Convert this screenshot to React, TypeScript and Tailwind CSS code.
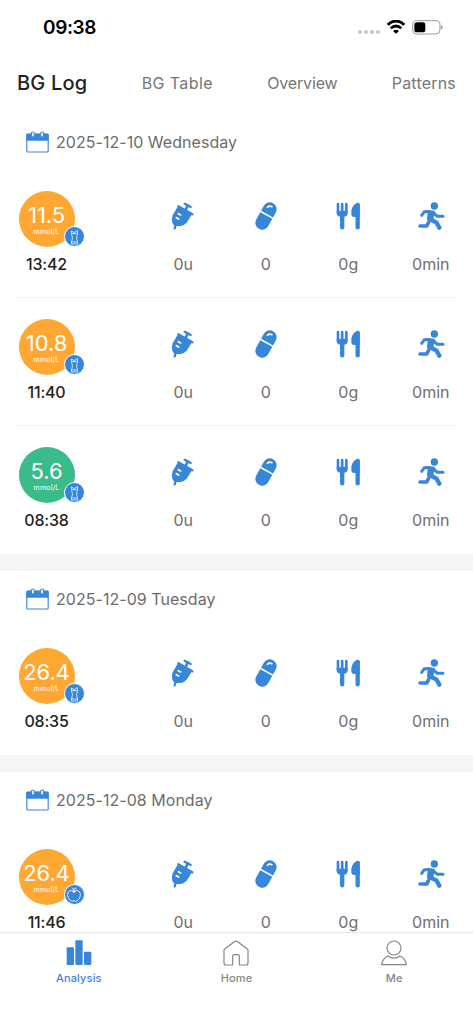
import type { ReactNode } from "react";

type MealKind = "drink" | "apple";

type Reading = {
  value: string;
  time: string;
  level: "high" | "normal";
  meal: MealKind;
};

type Day = {
  date: string;
  readings: Reading[];
};

const days: Day[] = [
  {
    date: "2025-12-10 Wednesday",
    readings: [
      { value: "11.5", time: "13:42", level: "high", meal: "drink" },
      { value: "10.8", time: "11:40", level: "high", meal: "drink" },
      { value: "5.6", time: "08:38", level: "normal", meal: "drink" },
    ],
  },
  {
    date: "2025-12-09 Tuesday",
    readings: [{ value: "26.4", time: "08:35", level: "high", meal: "drink" }],
  },
  {
    date: "2025-12-08 Monday",
    readings: [{ value: "26.4", time: "11:46", level: "high", meal: "apple" }],
  },
];

const SyringeIcon = () => (
  <svg viewBox="0 0 72 84" className="h-7 w-6" fill="none" stroke="currentColor" strokeLinecap="round">
    <path d="M41 5L59 15" strokeWidth="7" />
    <path d="M50 10L44 24" strokeWidth="8" />
    <path d="M22 13L64 37" strokeWidth="7" />
    <path d="M20 14L5 40Q1 50 4 62Q6 69 14 72L29 72Q41 70 48 61L62 38Z" fill="currentColor" stroke="none" />
    <path d="M14 69L11 79" strokeWidth="7" />
    <path d="M22 35L29 39M16 47L23 51" stroke="white" strokeWidth="5" />
  </svg>
);

const PillIcon = () => (
  <svg viewBox="0 0 72 84" className="h-7 w-6" fill="none">
    <g transform="translate(36 42) rotate(29)">
      <rect x="-20.5" y="-44" width="41" height="88" rx="20.5" fill="currentColor" />
      <path d="M-22 -4H22" stroke="white" strokeWidth="5" />
      <path d="M-9 -25Q-7 -33 2 -33" stroke="white" strokeWidth="5" strokeLinecap="round" />
    </g>
  </svg>
);

const CutleryIcon = () => (
  <svg viewBox="0 0 72 84" className="h-7 w-6" fill="none" stroke="currentColor" strokeLinecap="round">
    <path d="M6 6V31M18.500 6V31M31 6V31" strokeWidth="8" />
    <path d="M2 26H35V34Q35 43 25 44H12Q2 43 2 34Z" fill="currentColor" stroke="none" />
    <path d="M18.500 38V76M65 9V76" strokeWidth="13" />
    <path d="M71 8Q71 2 64 3Q50 7 46 26V38Q47 45 55 45H71Z" fill="currentColor" stroke="none" />
  </svg>
);

const RunnerIcon = () => (
  <svg viewBox="0 0 84 84" className="size-7" fill="none" stroke="currentColor" strokeLinecap="round" strokeLinejoin="round">
    <circle cx="52" cy="12" r="11" fill="currentColor" stroke="none" />
    <path d="M14 40L21 30Q28 27 40 29" strokeWidth="9" />
    <path d="M35 28L51 29L47 48L49 58L37 58Q31 54 33 46Z" fill="currentColor" strokeWidth="5" />
    <path d="M50 33L61 43H78" strokeWidth="9" />
    <path d="M41 53L59 62L67 77" strokeWidth="13" />
    <path d="M34 63L29 72H9" strokeWidth="11" />
  </svg>
);

const CalendarIcon = () => (
  <svg viewBox="0 0 69 66" className="h-[22px] w-[23px]" fill="none">
    <rect x="2.500" y="9" width="64" height="54" rx="3" stroke="#3886d9" strokeWidth="3.500" />
    <path d="M1 12Q1 8 5 8H64Q68 8 68 12V29H1Z" fill="#3886d9" />
    <rect x="16" y="3" width="9" height="15" rx="4.500" fill="white" stroke="#3886d9" strokeWidth="3.500" />
    <rect x="44" y="3" width="9" height="15" rx="4.500" fill="white" stroke="#3886d9" strokeWidth="3.500" />
  </svg>
);

const MealIcon = ({ kind }: { kind: MealKind }) =>
  kind === "drink" ? (
    <svg viewBox="0 0 26 48" className="h-4 w-[9px]" fill="none" stroke="white" strokeWidth="2.200" strokeLinejoin="round">
      <path d="M4 14H22L19 27L22 39V45H4V39L7 27Z" />
      <path d="M5 14L3 6L10 9L13 14L16 7L22 5V14M4 39H22" />
    </svg>
  ) : (
    <svg viewBox="0 0 42 45" className="h-[15px] w-3.5" fill="none" stroke="white" strokeWidth="2.500" strokeLinecap="round">
      <path d="M21 13Q13 8 7 12Q1 17 2 26Q4 37 12 42Q16 44 21 41Q26 44 30 42Q38 37 40 26Q41 17 35 12Q29 8 21 13Z" />
      <path d="M21 17V7M21 7Q17 7 15 3M21 7Q23 2 27 3M17 14Q21 17 25 14" />
    </svg>
  );

const StatusBar = () => (
  <div className="flex h-[54px] items-center justify-between pl-[43px] pr-[30px]">
    <span className="pt-0.5 text-[19px] font-semibold leading-6 tracking-[-0.4px] text-black">09:38</span>
    <div className="flex items-center">
      <div className="mr-[7px] mt-[10px] flex gap-[2px]">
        {[0, 1, 2, 3].map((dot) => (
          <i key={dot} className="size-1 rounded-full bg-[#c4c4c4]" />
        ))}
      </div>
      <svg viewBox="0 0 54 42" className="mr-[7px] h-3.5 w-[18px]" fill="none" stroke="black">
        <path d="M2 14Q27 -8 52 14" strokeWidth="8" />
        <path d="M11 25Q27 11 43 25" strokeWidth="8" />
        <path d="M18 33Q27 25 36 33L27 41Z" fill="black" stroke="none" />
      </svg>
      <svg viewBox="0 0 93 45" className="h-[15px] w-[31px]" fill="none">
        <rect x="2" y="2" width="82" height="40" rx="12" stroke="#9b9b9b" strokeWidth="3" />
        <rect x="7" y="7" width="33" height="30" rx="8" fill="black" />
        <path d="M87 16Q92 18 92 22Q92 26 87 28Z" fill="#9b9b9b" />
      </svg>
    </div>
  </div>
);

const Tabs = () => (
  <nav className="flex h-[58px] items-center justify-between pl-[17px] pr-[17px] text-base text-[#767676]">
    <span className="text-[20px] font-medium tracking-[0.2px] text-[#222]">BG Log</span>
    <span className="tracking-[0.4px]">BG Table</span>
    <span className="tracking-[-0.15px]">Overview</span>
    <span className="tracking-[0.2px]">Patterns</span>
  </nav>
);

const Metric = ({ icon, label }: { icon: ReactNode; label: string }) => (
  <div className="flex flex-col items-center pt-8 text-[#3886d9]">
    {icon}
    <span className="mt-[22px] text-base leading-6 text-[#707070]">{label}</span>
  </div>
);

const ReadingRow = ({ reading }: { reading: Reading }) => (
  <div className="group h-32">
    <div className="grid h-[127px] grid-cols-[93px_49px_repeat(4,82.5px)]">
      <div className="flex flex-col items-center pt-[21px]">
        <div
          className={`relative flex size-14 flex-col items-center rounded-full text-white ${
            reading.level === "high" ? "bg-[#ffa733]" : "bg-[#3abb8a]"
          }`}
        >
          <span className="mt-3 text-[22px] leading-6 tracking-[-0.1px]">{reading.value}</span>
          <span className="text-[7px] leading-[10px] tracking-[0.2px]">mmol/L</span>
          <div className="absolute -right-[10px] bottom-0 flex size-[21px] items-center justify-center rounded-full border border-white bg-[#3886d9]">
            <MealIcon kind={reading.meal} />
          </div>
        </div>
        <span className="mt-[5px] text-base font-medium leading-6 tracking-[-0.2px] text-[#222]">{reading.time}</span>
      </div>
      <div />
      <Metric icon={<SyringeIcon />} label="0u" />
      <Metric icon={<PillIcon />} label="0" />
      <Metric icon={<CutleryIcon />} label="0g" />
      <Metric icon={<RunnerIcon />} label="0min" />
    </div>
    <div className="mx-4 h-px bg-[#f4f4f4] group-last:bg-white" />
  </div>
);

const DaySection = ({ day }: { day: Day }) => (
  <section className="bg-white">
    <div className="flex h-14 items-center gap-[7px] pl-[26px] text-base text-[#6c6c6c]">
      <CalendarIcon />
      <span className="tracking-[0.04px]">{day.date}</span>
    </div>
    <div>
      {day.readings.map((reading) => (
        <ReadingRow key={reading.time} reading={reading} />
      ))}
    </div>
  </section>
);

const BottomNav = () => (
  <nav className="grid h-[92px] shrink-0 grid-cols-3 border-t border-[#e6e6e6] bg-white text-[11px] font-medium tracking-[0.15px] text-[#858585]">
    <div className="flex flex-col items-center pt-[7px] text-[#3886d9]">
      <svg viewBox="0 0 78 78" className="size-[26px]" fill="currentColor">
        <rect x="2" y="22" width="22" height="53" rx="3" />
        <rect x="28" y="1" width="22" height="74" rx="3" />
        <rect x="54" y="35" width="22" height="40" rx="3" />
      </svg>
      <span className="mt-1 leading-4">Analysis</span>
    </div>
    <div className="flex flex-col items-center pt-[7px]">
      <svg viewBox="0 0 78 78" className="size-[26px]" fill="none" stroke="currentColor" strokeWidth="3.500" strokeLinejoin="round">
        <path d="M3 32Q3 28 6 26L34 5Q39 2 44 5L72 26Q75 28 75 32V69Q75 75 69 75H49V49Q49 44 44 44H34Q29 44 29 49V75H9Q3 75 3 69Z" />
      </svg>
      <span className="mt-1 leading-4">Home</span>
    </div>
    <div className="flex flex-col items-center pt-[7px]">
      <svg viewBox="0 0 78 78" className="size-[26px]" fill="none" stroke="currentColor" strokeWidth="3.500" strokeLinejoin="round">
        <circle cx="39" cy="24" r="21" />
        <path d="M21 48Q39 61 57 48Q73 55 76 74H2Q5 55 21 48Z" />
      </svg>
      <span className="mt-1 leading-4">Me</span>
    </div>
  </nav>
);

export default function App() {
  return (
    <div className="flex h-screen flex-col overflow-hidden bg-white font-['Inter',sans-serif]">
      <header className="shrink-0 pb-0.5">
        <StatusBar />
        <Tabs />
      </header>
      <main className="flex min-h-0 flex-1 flex-col overflow-hidden">
        <div className="flex shrink-0 flex-col gap-[17px] bg-[#f6f6f6]">
          {days.map((day) => (
            <DaySection key={day.date} day={day} />
          ))}
        </div>
      </main>
      <BottomNav />
    </div>
  );
}
